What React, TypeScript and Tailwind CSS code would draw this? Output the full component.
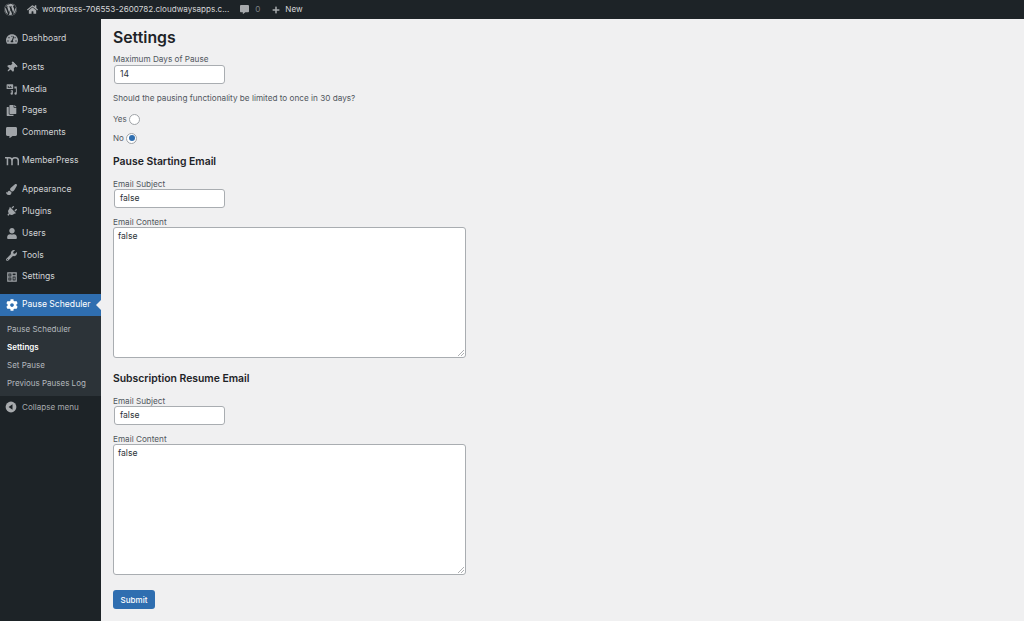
import { FaWordpress, FaHome, FaCommentAlt, FaPlus, FaTachometerAlt, FaThumbtack, FaCopy, FaPaintBrush, FaPlug, FaUser, FaWrench, FaCog } from 'react-icons/fa'
import type { ReactNode } from 'react'

function MediaIcon() {
  return (
    <svg viewBox="0 0 20 20" className="w-[12px] h-[12px]" fill="currentColor">
      <path d="M2 2h9a1 1 0 0 1 1 1v6a1 1 0 0 1-1 1H2a1 1 0 0 1-1-1V3a1 1 0 0 1 1-1zm1 2v4h7l-2.500-3-2 2-1-1z" fillRule="evenodd" />
      <path d="M14 6h4v11.500a2 2 0 1 1-1.500-1.900V9h-2.500zM8 12h3.500v5.500a2 2 0 1 1-1.500-1.900V14H8z" />
    </svg>
  )
}

function MemberPressIcon() {
  return (
    <svg viewBox="0 0 20 14" className="w-[14px] h-[10px]" fill="none" stroke="currentColor" strokeWidth="2.2">
      <path d="M0 2.500h6a4 4 0 0 1 4 4V13M3.500 2.500V13M10 6.500a4 4 0 0 1 4-4h1a4 4 0 0 1 4 4V13" />
    </svg>
  )
}

function SettingsIcon() {
  return (
    <svg viewBox="0 0 20 20" className="w-[12px] h-[12px]" fill="currentColor">
      <path fillRule="evenodd" d="M2 2h16v16H2zM4 4v5h5V4zm7 0v3h5V4zm0 5v7h5V9zM4 11v5h5v-5z" />
      <path d="M5.500 6h2v1.500h-2zM12.500 11h2v3h-2zM5.500 12.500h2V14h-2z" />
    </svg>
  )
}

function CollapseIcon() {
  return (
    <svg viewBox="0 0 20 20" className="w-[12px] h-[12px]">
      <circle cx="10" cy="10" r="9" fill="currentColor" />
      <path d="M12.500 5.500v9L6 10z" fill="#1d2327" />
    </svg>
  )
}

interface MenuItem {
  icon: ReactNode
  label: string
  gap?: string
}

const menu: MenuItem[] = [
  { icon: <FaTachometerAlt className="w-[12px] h-[12px]" />, label: 'Dashboard', gap: 'mt-[9px]' },
  { icon: <FaThumbtack className="w-[11px] h-[11px] rotate-45" />, label: 'Posts', gap: 'mt-[6.5px]' },
  { icon: <MediaIcon />, label: 'Media' },
  { icon: <FaCopy className="w-[11px] h-[11px]" />, label: 'Pages' },
  { icon: <FaCommentAlt className="w-[11px] h-[11px]" />, label: 'Comments' },
  { icon: <MemberPressIcon />, label: 'MemberPress', gap: 'mt-[6.5px]' },
  { icon: <FaPaintBrush className="w-[11px] h-[11px]" />, label: 'Appearance', gap: 'mt-[7px]' },
  { icon: <FaPlug className="w-[11px] h-[11px] rotate-45" />, label: 'Plugins' },
  { icon: <FaUser className="w-[10px] h-[11px]" />, label: 'Users' },
  { icon: <FaWrench className="w-[11px] h-[11px]" />, label: 'Tools' },
  { icon: <SettingsIcon />, label: 'Settings' },
]

const submenu = ['Pause Scheduler', 'Settings', 'Set Pause', 'Previous Pauses Log']

function AdminBar() {
  return (
    <header className="h-[19px] bg-[#1d2327] text-[#c3c4c7] flex items-center text-[8.1px] shrink-0">
      <FaWordpress className="w-[13px] h-[13px] ml-[4px] text-[#a7aaad]" />
      <FaHome className="w-[11px] h-[11px] ml-[10px] text-[#a7aaad]" />
      <span className="ml-[4px] text-[#d5d6d8]">wordpress-706553-2600782.cloudwaysapps.c...</span>
      <FaCommentAlt className="w-[9px] h-[9px] ml-[11px] text-[#a7aaad]" />
      <span className="ml-[6px] text-[#7d8185]">0</span>
      <FaPlus className="w-[8px] h-[8px] ml-[12px] text-[#a7aaad]" />
      <span className="ml-[5px] text-[#d5d6d8]">New</span>
    </header>
  )
}

function Sidebar() {
  return (
    <nav className="w-[101px] shrink-0 bg-[#1d2327] text-[#d0d2d4] text-[8.6px]">
      {menu.map(item => (
        <div key={item.label} className={`h-[21.8px] flex items-center ${item.gap ?? ''}`}>
          <span className="w-[22px] flex justify-center pl-[1px] text-[#a0a4a8]">{item.icon}</span>
          <span>{item.label}</span>
        </div>
      ))}
      <div className="relative mt-[6px] h-[22px] bg-[#2f6eb0] text-white flex items-center">
        <span className="w-[22px] flex justify-center pl-[1px]">
          <FaCog className="w-[12px] h-[12px]" />
        </span>
        <span>Pause Scheduler</span>
        <span className="absolute right-0 top-[6px] border-y-[5px] border-y-transparent border-r-[5px] border-r-[#f0f0f1]" />
      </div>
      <div className="bg-[#2c3338] h-[80px] pt-[4px] text-[8px] text-[#b4b9be]">
        {submenu.map(label => (
          <div key={label} className={`h-[18px] flex items-center pl-[7px] ${label === 'Settings' ? 'text-white font-semibold' : ''}`}>
            {label}
          </div>
        ))}
      </div>
      <div className="h-[22px] flex items-center text-[#a7aaad] text-[8.1px]">
        <span className="w-[22px] flex justify-center"><CollapseIcon /></span>
        <span>Collapse menu</span>
      </div>
    </nav>
  )
}

function Label({ children, className }: { children: ReactNode; className: string }) {
  return <div className={`ml-[1px] h-[12px] leading-[12px] text-[8.2px] text-[#50575e] ${className}`}>{children}</div>
}

function TextBox({ value }: { value: string }) {
  return (
    <div className="ml-[2px] w-[111px] h-[19px] flex items-center pl-[5px] bg-white border border-[#a9adb1] rounded-[3px] text-[8.6px] text-[#2c3338]">
      {value}
    </div>
  )
}

function ContentBox({ value }: { value: string }) {
  return (
    <div className="relative ml-[1px] w-[353px] h-[131px] px-[4px] py-[2px] bg-white border border-[#a9adb1] rounded-[3px] text-[8.6px] leading-[12px] text-[#2c3338]">
      {value}
      <svg viewBox="0 0 6 6" className="absolute right-[1px] bottom-[1px] w-[6px] h-[6px]" stroke="#8c8f94" strokeWidth="0.7">
        <path d="M0 6 6 0M3 6l3-3" />
      </svg>
    </div>
  )
}

function Radio({ checked }: { checked?: boolean }) {
  return (
    <span className="ml-[2.500px] w-[11px] h-[11px] rounded-full bg-white border border-[#a0a4a8] flex items-center justify-center">
      {checked && <span className="w-[5.500px] h-[5.500px] rounded-full bg-[#2f6eb0]" />}
    </span>
  )
}

function EmailSection({ title, top }: { title: string; top: string }) {
  return (
    <section>
      <h2 className={`ml-[1px] h-[14px] leading-[14px] text-[10.4px] font-semibold text-[#1d2327] ${top}`}>{title}</h2>
      <Label className="mt-[9px]">Email Subject</Label>
      <div className="mt-[-1px]"><TextBox value="false" /></div>
      <Label className="mt-[8px]">Email Content</Label>
      <div className="mt-[-1px]"><ContentBox value="false" /></div>
    </section>
  )
}

export default function App() {
  return (
    <div className="w-[1024px] h-[621px] overflow-hidden flex flex-col bg-[#f0f0f1] font-['Inter','Liberation_Sans',sans-serif]">
      <AdminBar />
      <div className="flex flex-1 min-h-0">
        <Sidebar />
        <main className="flex-1 pl-[11px]">
          <h1 className="ml-[1px] mt-[8px] h-[22px] leading-[22px] text-[15.8px] font-semibold text-[#1d2327]">Settings</h1>
          <Label className="mt-[4px]">Maximum Days of Pause</Label>
          <div className="mt-[0px]"><TextBox value="14" /></div>
          <Label className="mt-[8px]">Should the pausing functionality be limited to once in 30 days?</Label>
          <div className="ml-[1px] mt-[8px] h-[14px] flex items-center text-[8px] text-[#50575e]">Yes<Radio /></div>
          <div className="ml-[1px] mt-[5px] h-[14px] flex items-center text-[8px] text-[#50575e]">No<Radio checked /></div>
          <EmailSection title="Pause Starting Email" top="mt-[10px]" />
          <EmailSection title="Subscription Resume Email" top="mt-[14px]" />
          <button className="ml-[1px] mt-[15px] w-[42px] h-[19px] rounded-[3px] bg-[#2f6eb0] text-white text-[8px] font-medium">Submit</button>
        </main>
      </div>
    </div>
  )
}
